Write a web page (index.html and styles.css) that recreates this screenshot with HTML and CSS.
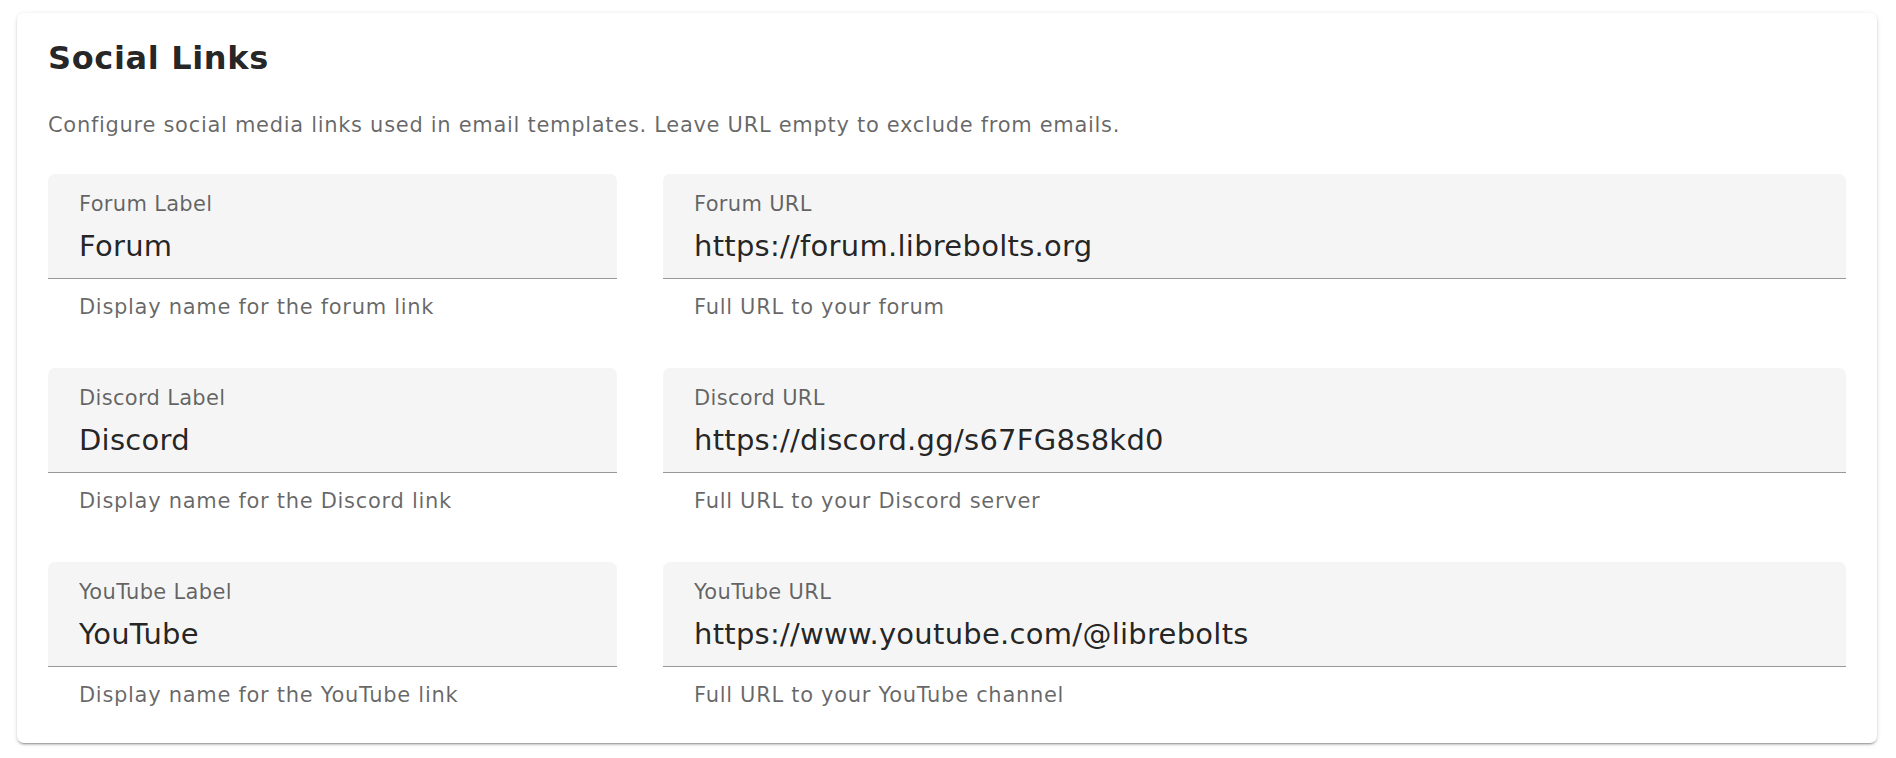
FILE: index.html
```html
<!DOCTYPE html>
<html lang="en">
<head>
<meta charset="utf-8">
<title>Social Links</title>
<link rel="stylesheet" href="styles.css">
</head>
<body>
<div class="page">
  <section class="card">
    <h2 class="card-title">Social Links</h2>
    <p class="card-desc">Configure social media links used in email templates. Leave URL empty to exclude from emails.</p>
    <div class="rows">
      <div class="row">
        <div class="field-wrap">
          <div class="field"><span class="label">Forum Label</span><span class="value">Forum</span></div>
          <div class="hint">Display name for the forum link</div>
        </div>
        <div class="field-wrap">
          <div class="field"><span class="label">Forum URL</span><span class="value">https://forum.librebolts.org</span></div>
          <div class="hint">Full URL to your forum</div>
        </div>
      </div>
      <div class="row">
        <div class="field-wrap">
          <div class="field"><span class="label">Discord Label</span><span class="value">Discord</span></div>
          <div class="hint">Display name for the Discord link</div>
        </div>
        <div class="field-wrap">
          <div class="field"><span class="label">Discord URL</span><span class="value">https://discord.gg/s67FG8s8kd0</span></div>
          <div class="hint">Full URL to your Discord server</div>
        </div>
      </div>
      <div class="row">
        <div class="field-wrap">
          <div class="field"><span class="label">YouTube Label</span><span class="value">YouTube</span></div>
          <div class="hint">Display name for the YouTube link</div>
        </div>
        <div class="field-wrap">
          <div class="field"><span class="label">YouTube URL</span><span class="value">https://www.youtube.com/@librebolts</span></div>
          <div class="hint">Full URL to your YouTube channel</div>
        </div>
      </div>
    </div>
  </section>
</div>
</body>
</html>
```

FILE: styles.css
```css
* { box-sizing: border-box; }
html, body { margin: 0; padding: 0; background: #ffffff; }
body { font-family: "DejaVu Sans", Verdana, sans-serif; color: rgba(0,0,0,0.87); }

.page { padding: 13px 19px 16px 17px; }

.card {
  background: #fff;
  border-radius: 7px;
  padding: 25px 31px 36px 31px;
  box-shadow: 0 3px 1px -2px rgba(0,0,0,0.2), 0 2px 2px 0 rgba(0,0,0,0.14), 0 1px 5px 0 rgba(0,0,0,0.12);
}

.card-title {
  margin: 0;
  font-size: 32px;
  line-height: 40px;
  font-weight: 700;
  letter-spacing: 0.02em;
  color: rgba(0,0,0,0.87);
}

.card-desc {
  margin: 32px 0 0 0;
  font-size: 21px;
  line-height: 30px;
  letter-spacing: 0.0333em;
  color: rgba(0,0,0,0.6);
}

.rows {
  margin-top: 34px;
  display: flex;
  flex-direction: column;
  gap: 49px;
}

.row {
  display: grid;
  grid-template-columns: 569fr 1183fr;
  column-gap: 46px;
}

.field {
  height: 105px;
  background: #f5f5f5;
  border-radius: 7px 7px 0 0;
  border-bottom: 1px solid rgba(0,0,0,0.38);
  padding: 18px 31px 0 31px;
  display: flex;
  flex-direction: column;
}

.label {
  font-size: 21px;
  line-height: 24px;
  letter-spacing: 0.015em;
  color: rgba(0,0,0,0.6);
}

.value {
  margin-top: 14px;
  font-size: 29px;
  line-height: 32px;
  letter-spacing: 0.009375em;
  color: rgba(0,0,0,0.87);
}

.hint {
  margin-top: 16px;
  padding: 0 31px;
  font-size: 21px;
  line-height: 24px;
  letter-spacing: 0.0333em;
  color: rgba(0,0,0,0.6);
}
```
